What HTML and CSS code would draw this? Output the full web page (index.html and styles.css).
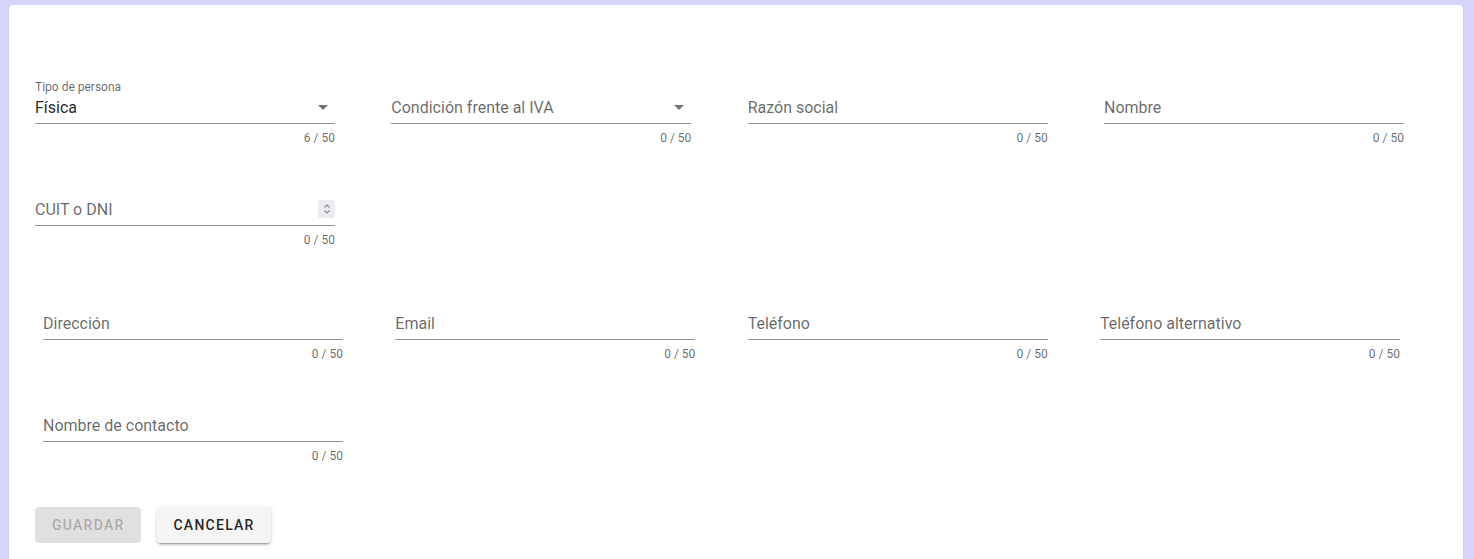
FILE: index.html
```html
<!DOCTYPE html>
<html lang="es">
<head>
<meta charset="utf-8">
<title>Cliente</title>
<link rel="stylesheet" href="styles.css">
</head>
<body>
<div class="card">
  <div class="section section-a">
    <div class="row">
      <div class="field">
        <span class="float-label">Tipo de persona</span>
        <div class="slot"><span class="value">Física</span>
          <svg class="caret" width="24" height="24" viewBox="0 0 24 24"><path d="M7 10l5 5 5-5z" fill="rgba(0,0,0,0.54)"/></svg>
        </div>
        <div class="details">6 / 50</div>
      </div>
      <div class="field">
        <div class="slot"><span class="label">Condición frente al IVA</span>
          <svg class="caret" width="24" height="24" viewBox="0 0 24 24"><path d="M7 10l5 5 5-5z" fill="rgba(0,0,0,0.54)"/></svg>
        </div>
        <div class="details">0 / 50</div>
      </div>
      <div class="field">
        <div class="slot"><span class="label">Razón social</span></div>
        <div class="details">0 / 50</div>
      </div>
      <div class="field">
        <div class="slot"><span class="label">Nombre</span></div>
        <div class="details">0 / 50</div>
      </div>
    </div>
    <div class="row row-next">
      <div class="field">
        <div class="slot"><span class="label">CUIT o DNI</span>
          <span class="spin"><svg width="16" height="18" viewBox="0 0 16 18"><path d="M5.5 7.5L8 5l2.5 2.5M5.5 10.5L8 13l2.5-2.5" fill="none" stroke="#888" stroke-width="1.1"/></svg></span>
        </div>
        <div class="details">0 / 50</div>
      </div>
    </div>
  </div>
  <div class="section section-b">
    <div class="row">
      <div class="field">
        <div class="slot"><span class="label">Dirección</span></div>
        <div class="details">0 / 50</div>
      </div>
      <div class="field">
        <div class="slot"><span class="label">Email</span></div>
        <div class="details">0 / 50</div>
      </div>
      <div class="field">
        <div class="slot"><span class="label">Teléfono</span></div>
        <div class="details">0 / 50</div>
      </div>
      <div class="field">
        <div class="slot"><span class="label">Teléfono alternativo</span></div>
        <div class="details">0 / 50</div>
      </div>
    </div>
    <div class="row row-next">
      <div class="field">
        <div class="slot"><span class="label">Nombre de contacto</span></div>
        <div class="details">0 / 50</div>
      </div>
    </div>
  </div>
  <div class="actions">
    <button class="btn btn-disabled" disabled>Guardar</button>
    <button class="btn btn-raised">Cancelar</button>
  </div>
</div>
</body>
</html>
```

FILE: styles.css
```css
html, body {
  margin: 0;
  padding: 0;
  height: 100%;
  overflow: hidden;
}
body {
  background: #d6d4fd;
  font-family: Roboto, "Liberation Sans", sans-serif;
  padding: 5px 11px 0 9px;
  box-sizing: border-box;
}
.card {
  background: #fff;
  border-radius: 4px 4px 0 0;
  width: 1454px;
  min-height: 600px;
  box-shadow: 0 2px 1px -1px rgba(0,0,0,.12), 0 1px 1px 0 rgba(0,0,0,.08), 0 1px 3px 0 rgba(0,0,0,.08);
}
.section-a {
  padding: 74px 59px 0 26px;
}
.section-b {
  padding: 49px 63px 0 34px;
}
.row {
  display: flex;
  justify-content: space-between;
}
.row-next {
  margin-top: 37px;
}
.field {
  position: relative;
  width: 300px;
  padding-top: 12px;
}
.float-label {
  position: absolute;
  top: 2px;
  left: 0;
  font-size: 12px;
  line-height: 12px;
  color: rgba(0,0,0,.6);
}
.slot {
  height: 32px;
  border-bottom: 1px solid rgba(0,0,0,.42);
  display: flex;
  align-items: center;
  justify-content: space-between;
  position: relative;
}
.label {
  font-size: 16px;
  color: rgba(0,0,0,.6);
  line-height: 20px;
  margin-top: 2px;
}
.value {
  font-size: 16px;
  color: rgba(0,0,0,.87);
  line-height: 20px;
  margin-top: 2px;
}
.caret {
  display: block;
  margin-right: 0;
}
.spin {
  display: flex;
  width: 17px;
  height: 18px;
  background: #ececf0;
  border-radius: 2px;
  margin-right: 0;
  justify-content: center;
  align-items: center;
}
.spin svg { display: block; }
.details {
  padding-top: 8px;
  font-size: 12px;
  line-height: 12px;
  color: rgba(0,0,0,.6);
  text-align: right;
}
.actions {
  padding: 45px 0 0 26px;
  display: flex;
  gap: 16px;
}
.btn {
  height: 36px;
  padding: 0 16px;
  border: none;
  border-radius: 4px;
  font-family: Roboto, "Liberation Sans", sans-serif;
  font-size: 14px;
  font-weight: 500;
  letter-spacing: 1.25px;
  text-transform: uppercase;
}
.btn-disabled {
  background: rgba(0,0,0,.12);
  color: rgba(0,0,0,.26);
  padding: 0 17px;
}
.btn-raised {
  background: #f5f5f5;
  color: rgba(0,0,0,.87);
  box-shadow: 0 3px 1px -2px rgba(0,0,0,.2), 0 2px 2px 0 rgba(0,0,0,.14), 0 1px 5px 0 rgba(0,0,0,.12);
}
```
